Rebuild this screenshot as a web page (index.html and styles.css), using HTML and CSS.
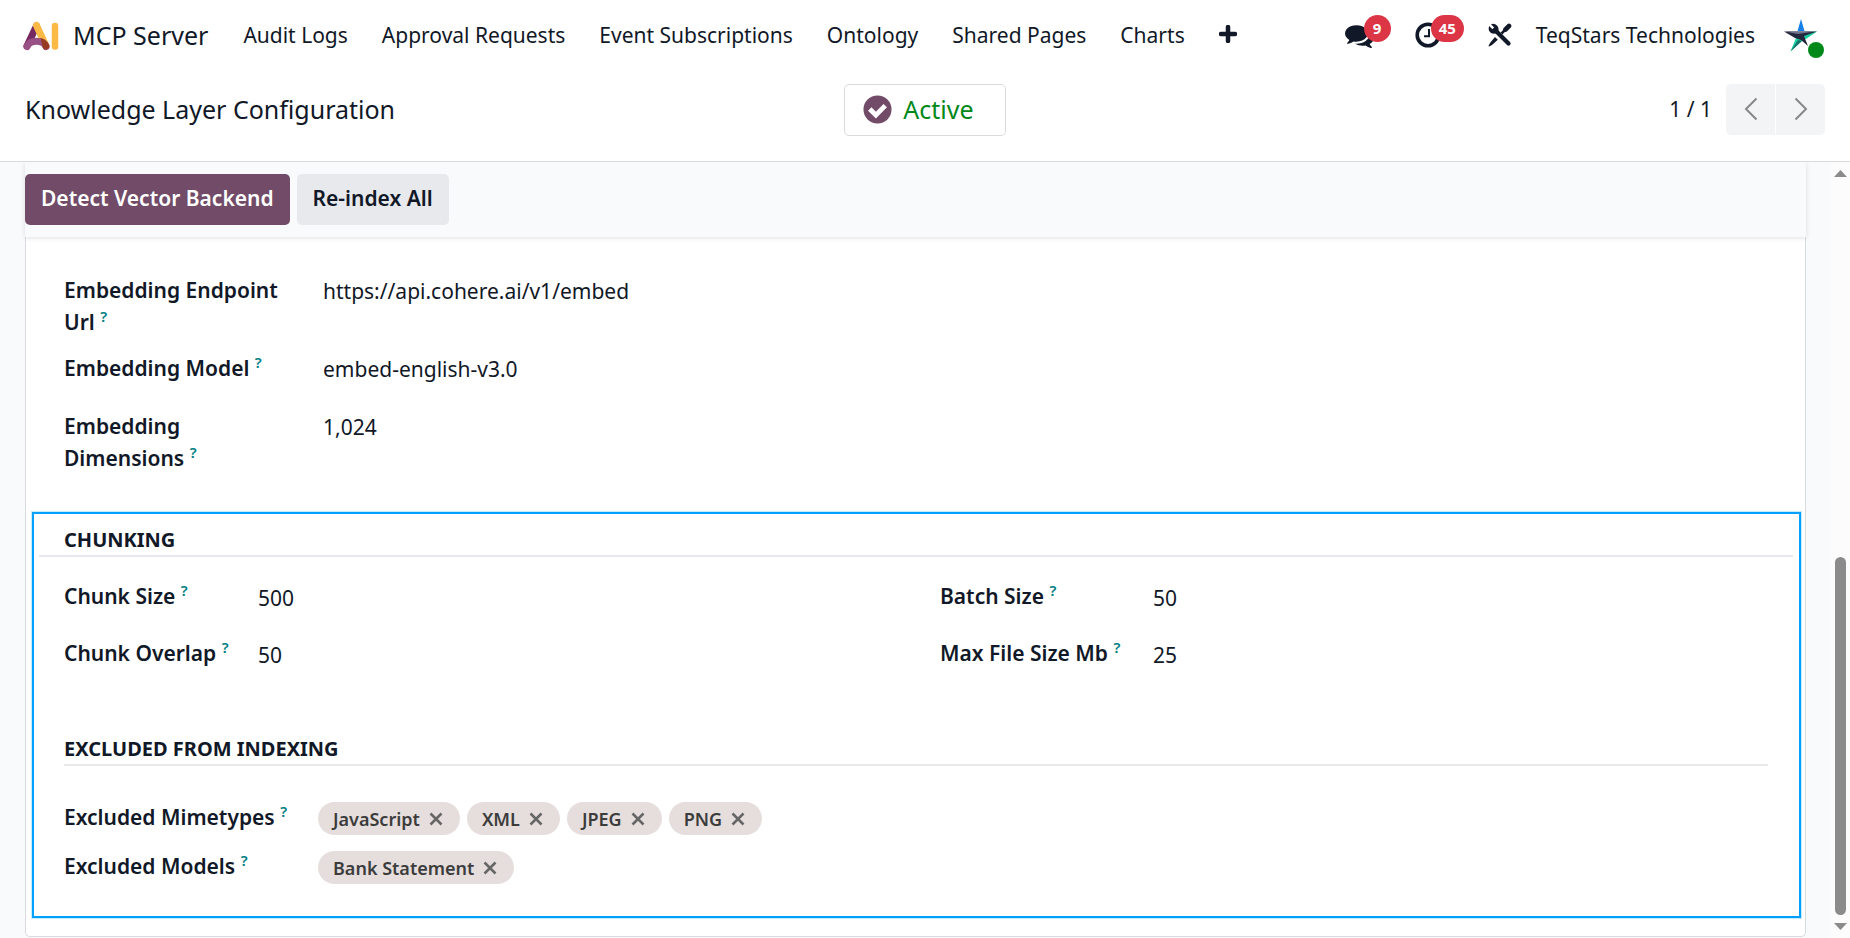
FILE: index.html
```html
<!DOCTYPE html>
<html lang="en">
<head>
<meta charset="utf-8">
<title>Knowledge Layer Configuration</title>
<link rel="stylesheet" href="styles.css">
</head>
<body>
<header class="navbar">
  <a class="brand" href="#">
    <svg class="brand-logo" viewBox="0 0 36 30" aria-hidden="true">
      <path d="M4 25 13.500 5" stroke="#762861" stroke-width="7" stroke-linecap="round"/>
      <path d="M13.500 4.500 23 25" stroke="#fbb945" stroke-width="7" stroke-linecap="round"/>
      <path d="M4 25.500C7 18.500 20 18.500 23 25.500" stroke="#985184" stroke-width="7" stroke-linecap="round" fill="none"/>
      <path d="M17.600 17Q24 18.500 26.300 24.500A3.500 3.500 0 0 1 20 27Z" fill="#953b24"/>
      <path d="M32 5V25.500" stroke="#fbb945" stroke-width="6.500" stroke-linecap="round"/>
    </svg>
    <span>MCP Server</span>
  </a>
  <nav class="menu">
    <a href="#">Audit Logs</a>
    <a href="#">Approval Requests</a>
    <a href="#">Event Subscriptions</a>
    <a href="#">Ontology</a>
    <a href="#">Shared Pages</a>
    <a href="#">Charts</a>
    <button class="plain" aria-label="More menus"><svg class="plus" viewBox="0 0 18 18"><path d="M9 2V16M2 9H16" stroke="currentColor" stroke-width="4.500" stroke-linecap="round"/></svg></button>
  </nav>
  <div class="systray">
    <button class="plain tray" aria-label="Messages">
      <svg class="ico-chat" viewBox="0 128 1792 1536"><path fill="currentColor" d="M1408 768q0 139-94 257t-256.500 186.500-353.500 68.500q-86 0-176-16-124 88-278 128-36 9-86 16h-3q-11 0-20.500-8t-11.500-21q-1-3-1-6.500t.5-6.500 2-6l2.500-5 3.500-5.500 4-5 4.500-5 4-4.500q5-6 23-25t26-29.500 22.500-29 25-38.500 20.500-44q-124-72-195-177t-71-224q0-139 94-257t256.500-186.500 353.500-68.500 353.500 68.500 256.500 186.500 94 257zm384 256q0 120-71 224.500t-195 176.500q10 24 20.500 44t25 38.500 22.500 29 26 29.500 23 25q1 1 4 4.500t4.500 5 4 5 3.500 5.500l2.500 5 2 6 .5 6.500-1 6.500q-3 14-13 22t-22 7q-50-7-86-16-154-40-278-128-90 16-176 16-271 0-472-132 58 4 88 4 161 0 309-45t264-129q125-92 192-212t67-254q0-77-23-152 129 71 204 178t75 230z"/></svg>
      <span class="count">9</span>
    </button>
    <button class="plain tray" aria-label="Activities">
      <svg class="ico-clock" viewBox="0 0 26 26" fill="none" stroke="currentColor"><circle cx="13" cy="13" r="10.800" stroke-width="3.600"/><path d="M14 7V14.200H9" stroke-width="2"/></svg>
      <span class="count">45</span>
    </button>
    <button class="plain" aria-label="Developer tools">
      <svg class="ico-tools" viewBox="0 0 24 24"><g fill="none" stroke="currentColor"><path d="M7 7 20.500 20.500" stroke-width="4.200" stroke-linecap="round"/><path d="M13.500 10.500 17 7" stroke-width="2.500"/><path d="M17.500 6.500 21 3" stroke-width="4.600" stroke-linecap="round"/></g><path fill="currentColor" d="M3 1.200 6.200 4.400 4.400 6.200 1.200 3Q-.5 8 3 10Q6 11.500 9 10L10 9Q11.500 5 9 2.500Q6.500 0 3 1.200ZM7 14 9.800 16.800Q7 19.500 4 22L1 23.500 .5 23 2 20Q4.500 17 7 14Z"/></svg>
    </button>
    <button class="plain company">TeqStars Technologies</button>
    <button class="plain avatar" aria-label="User menu">
      <svg class="ico-star" viewBox="0 0 34 34">
        <path d="M17 0 20.500 12H13.500Z" fill="#1680e8"/>
        <path d="M33 12.500 22 20 16 19 23 13Z" fill="#18cfa0"/>
        <path d="M12 19 20 20 6.500 32.500Z" fill="#14d2a1"/>
        <path d="M14 21 18 22 6.500 32.500Z" fill="#17706a"/>
        <path d="M0 12.500H33L20 17 24 27 17 21 11 19Z" fill="#24283f"/>
        <path d="M1 12.500H31L14 15Z" fill="#70748a"/>
      </svg>
      <span class="online"></span>
    </button>
  </div>
</header>

<section class="control">
  <h1 class="title">Knowledge Layer Configuration</h1>
  <button class="status">
    <svg class="check" viewBox="0 0 30 30"><circle cx="15" cy="15" r="14.500" fill="#714b67"/><path d="M7 14.500 13.300 20.800 23 11" fill="none" stroke="#fff" stroke-width="5"/></svg>
    Active
  </button>
  <div class="pager">
    <span class="pager-count">1 / 1</span>
    <div class="pager-buttons">
      <button aria-label="Previous"><svg class="chev" viewBox="0 0 14 24"><path d="M12.500 1.500 2 12 12.500 22.500"/></svg></button>
      <button aria-label="Next"><svg class="chev" viewBox="0 0 14 24"><path d="M1.500 1.500 12 12 1.500 22.500"/></svg></button>
    </div>
  </div>
</section>

<main class="content">
  <div class="form">
    <div class="actions">
      <button class="btn primary">Detect Vector Backend</button>
      <button class="btn">Re-index All</button>
    </div>
    <div class="sheet">
      <div class="fields embedding">
        <label for="endpoint">Embedding Endpoint Url <sup>?</sup></label>
        <input id="endpoint" value="https://api.cohere.ai/v1/embed">
        <label for="model">Embedding Model <sup>?</sup></label>
        <input id="model" value="embed-english-v3.0">
        <label for="dims">Embedding Dimensions <sup>?</sup></label>
        <input id="dims" value="1,024">
      </div>
      <div class="highlight">
        <h2 class="heading wide">CHUNKING</h2>
        <div class="columns">
          <div class="fields chunk">
            <label for="size">Chunk Size <sup>?</sup></label>
            <input id="size" value="500">
            <label for="overlap">Chunk Overlap <sup>?</sup></label>
            <input id="overlap" value="50">
          </div>
          <div class="fields batch">
            <label for="batch">Batch Size <sup>?</sup></label>
            <input id="batch" value="50">
            <label for="max">Max File Size Mb <sup>?</sup></label>
            <input id="max" value="25">
          </div>
        </div>
        <h2 class="heading">EXCLUDED FROM INDEXING</h2>
        <div class="excluded">
          <span class="label">Excluded Mimetypes <sup>?</sup></span>
          <div class="tags">
            <span class="tag">JavaScript<button aria-label="Remove JavaScript"><svg viewBox="0 0 14 14"><path d="M1.500 1.500 12.500 12.500M12.500 1.500 1.500 12.500"/></svg></button></span>
            <span class="tag">XML<button aria-label="Remove XML"><svg viewBox="0 0 14 14"><path d="M1.500 1.500 12.500 12.500M12.500 1.500 1.500 12.500"/></svg></button></span>
            <span class="tag">JPEG<button aria-label="Remove JPEG"><svg viewBox="0 0 14 14"><path d="M1.500 1.500 12.500 12.500M12.500 1.500 1.500 12.500"/></svg></button></span>
            <span class="tag">PNG<button aria-label="Remove PNG"><svg viewBox="0 0 14 14"><path d="M1.500 1.500 12.500 12.500M12.500 1.500 1.500 12.500"/></svg></button></span>
          </div>
          <span class="label">Excluded Models <sup>?</sup></span>
          <div class="tags">
            <span class="tag">Bank Statement<button aria-label="Remove Bank Statement"><svg viewBox="0 0 14 14"><path d="M1.500 1.500 12.500 12.500M12.500 1.500 1.500 12.500"/></svg></button></span>
          </div>
        </div>
      </div>
    </div>
  </div>
  <div class="scrollbar" aria-hidden="true">
    <svg class="arrow" viewBox="0 0 13 7"><path d="M0 7 6.500 0 13 7Z"/></svg>
    <div class="track"><div class="thumb"></div></div>
    <svg class="arrow" viewBox="0 0 13 7"><path d="M0 0 6.500 7 13 0Z"/></svg>
  </div>
</main>
</body>
</html>
```
FILE: styles.css
```css
* { box-sizing: border-box; }
body {
  margin: 0;
  height: 100vh;
  display: flex;
  flex-direction: column;
  overflow: hidden;
  background: #fff;
  color: #111827;
  font: 21px/32px "Noto Sans", "Open Sans", sans-serif;
}
button, input { font: inherit; color: inherit; }
button { cursor: pointer; }
a { color: inherit; text-decoration: none; }
svg { display: block; flex: none; }
.plain { border: 0; padding: 0; background: none; }

/* Top navigation */
.navbar {
  display: flex;
  align-items: center;
  height: 72px;
  padding: 0 26px 2px 23px;
  white-space: nowrap;
}
.brand { display: flex; align-items: center; gap: 14px; font-size: 25px; }
.brand-logo { width: 36px; height: 30px; margin-top: 2px; fill: none; }
.menu { display: flex; align-items: center; gap: 34px; margin-left: 35px; }
.plus { width: 18px; height: 18px; margin-bottom: 3px; }
.systray { display: flex; align-items: center; margin-left: auto; gap: 24px; }
.tray { display: flex; align-items: center; }
.ico-chat { width: 29px; height: 25px; }
.ico-clock { width: 26px; height: 26px; }
.count {
  min-width: 27px;
  height: 27px;
  margin: 0 0 14px -10px;
  padding: 0 8px;
  border-radius: 14px;
  background: #dc3545;
  color: #fff;
  font-size: 15px;
  font-weight: 700;
  line-height: 27px;
}
.ico-tools { width: 24px; height: 24px; }
.company { margin-right: 5px; }
.avatar { position: relative; }
.ico-star { width: 34px; height: 34px; margin: 2px 6px 0 0; }
.online {
  position: absolute;
  right: 0;
  bottom: -5px;
  width: 16px;
  height: 16px;
  border-radius: 50%;
  background: #008818;
}

/* Title, status and pager */
.control {
  display: grid;
  grid-template-columns: 1fr auto 1fr;
  align-items: start;
  height: 90px;
  padding: 12px 25px 0;
  border-bottom: 1px solid #d8dadd;
}
.title { margin: 0; font-size: 25px; font-weight: 400; line-height: 50px; }
.status {
  display: flex;
  align-items: center;
  gap: 11px;
  height: 52px;
  padding: 0 31px 2px 18px;
  border: 1px solid #d8dadd;
  border-radius: 5px;
  background: #fff;
  color: #008818;
  font-size: 25px;
}
.check { width: 29px; height: 29px; }
.pager { display: flex; justify-content: flex-end; align-items: center; gap: 14px; }
.pager-count { padding-bottom: 2px; }
.pager-buttons { display: flex; gap: 1px; }
.pager-buttons button {
  display: grid;
  place-items: center;
  width: 49px;
  height: 51px;
  border: 0;
  padding: 0 0 2px;
  background: #f3f4f6;
}
.pager-buttons button:first-child { border-radius: 5px 0 0 5px; }
.pager-buttons button:last-child { border-radius: 0 5px 5px 0; }
.chev { width: 14px; height: 24px; fill: none; stroke: #888; stroke-width: 2; }

/* Form area */
.content { display: flex; flex: 1; min-height: 0; background: #f9fafb; }
.form { display: flex; flex-direction: column; flex: 1; padding: 0 25px; min-width: 0; }
.actions {
  display: flex;
  gap: 7px;
  padding: 12px 0;
  background: #f9fafb;
  box-shadow: 0 1px 5px rgba(0, 0, 0, .12);
  clip-path: inset(0 -6px -6px -6px);
  z-index: 1;
}
.btn {
  height: 51px;
  padding: 0 16px 3px;
  border: 0;
  border-radius: 5px;
  background: #e7e9ed;
  font-weight: 600;
}
.primary { background: #714b67; color: #fff; }
.sheet {
  padding: 37px 4px 18px 6px;
  border: 1px solid #d8dadd;
  border-top: 0;
  border-radius: 0 0 5px 5px;
  background: #fff;
}
.fields { display: grid; align-content: start; }
.fields label, .label { font-weight: 600; }
.fields input {
  width: 100%;
  height: 34px;
  padding: 0;
  border: 0;
  outline: 0;
  background: transparent;
}
sup {
  color: #017e84;
  font-size: 15px;
  font-weight: 600;
  line-height: 0;
  vertical-align: 8px;
}
.embedding {
  grid-template-columns: 224px 1fr;
  gap: 14px 35px;
  padding: 0 32px 38px;
}
.embedding input { margin-bottom: 10px; }
.highlight {
  padding: 12px 6px 32px 5px;
  border: 2px solid #00a0ff;
  box-shadow: 0 0 0 1px #c5ebff;
}
.heading {
  margin: 0 25px;
  padding-bottom: 1px;
  border-bottom: 2px solid #e7e9ed;
  font-size: 20px;
  font-weight: 700;
  line-height: 28px;
}
.wide { margin: 0; padding-left: 25px; }
.columns {
  display: grid;
  grid-template-columns: 1fr 1fr;
  gap: 48px;
  padding: 24px 25px 63px;
}
.columns .fields { row-gap: 23px; }
.columns label { line-height: 30px; }
.chunk { grid-template-columns: 194px 1fr; }
.batch { grid-template-columns: 213px 1fr; }
.excluded {
  display: grid;
  grid-template-columns: 254px 1fr;
  row-gap: 16px;
  padding: 36px 25px 0;
}
.label { line-height: 30px; }
.tags { display: flex; gap: 7px; }
.tag {
  display: flex;
  align-items: center;
  gap: 9px;
  height: 33px;
  padding: 0 17px 0 15px;
  border-radius: 17px;
  background: #e6dedd;
  color: #3c3c3c;
  font-size: 18px;
  font-weight: 600;
}
.tag button { padding: 0; border: 0; background: none; }
.tag svg { width: 14px; height: 14px; stroke: #666; stroke-width: 2.5; }

/* Scroll indicator */
.scrollbar {
  display: flex;
  flex-direction: column;
  align-items: center;
  gap: 8px;
  width: 19px;
  padding: 8px 0;
  background: #fcfcfc;
}
.arrow { width: 13px; height: 7px; fill: #8b8b8b; }
.track { display: flex; flex-direction: column; justify-content: flex-end; flex: 1; }
.thumb { width: 11px; height: 49%; border-radius: 6px; background: #8b8b8b; }
```
